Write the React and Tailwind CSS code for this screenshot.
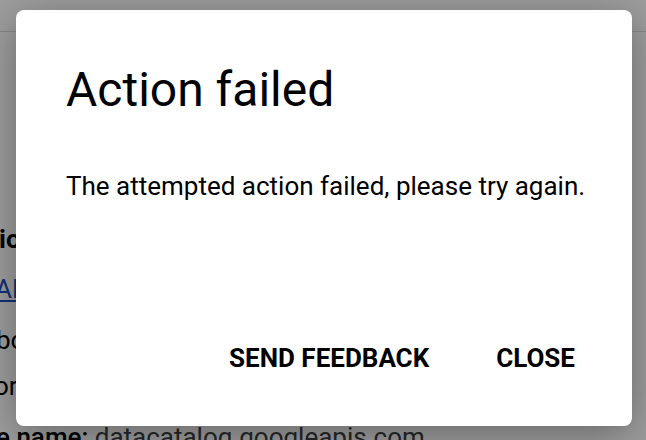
import React from 'react';

const App = () => {
  return (
    <div className="relative w-[646px] h-[440px] overflow-hidden bg-white font-['Roboto',sans-serif]">
      {/* page behind the dialog */}
      <div className="h-[32px] border-b border-[#dadada]" />
      <div className="flex flex-col text-[26px] leading-[32px] text-black">
        <div className="mt-[191px] ml-[-1px] font-bold">ion</div>
        <div className="mt-[18px] ml-[-5px] text-[#1a4fc4] underline">API</div>
        <div className="mt-[19px] ml-[-4px]">bound</div>
        <div className="mt-[14px] ml-[-6px]">order</div>
        <div className="mt-[19px] ml-[-4px] whitespace-nowrap">
          <span className="font-medium">e name:</span> <span className="text-[#3c4043]">datacatalog.googleapis.com</span>
        </div>
      </div>

      {/* scrim */}
      <div className="absolute inset-0 bg-[rgba(0,0,0,0.38)]" />

      {/* dialog */}
      <div className="absolute left-[16px] top-[10px] w-[616px] h-[416px] bg-white rounded-lg shadow-[0_8px_40px_rgba(0,0,0,0.35)] flex flex-col pl-[50px] pt-[52px]">
        <h2 className="text-[48px] leading-[56px] text-black font-normal">Action failed</h2>
        <p className="mt-[52px] text-[26px] leading-[32px] text-black">
          The attempted action failed, please try again.
        </p>
        <div className="mt-auto mb-[52px] flex justify-end gap-[67px] pr-[57px] text-[26px] leading-[32px] font-bold text-black">
          <button>SEND FEEDBACK</button>
          <button>CLOSE</button>
        </div>
      </div>
    </div>
  );
};

export default App;
